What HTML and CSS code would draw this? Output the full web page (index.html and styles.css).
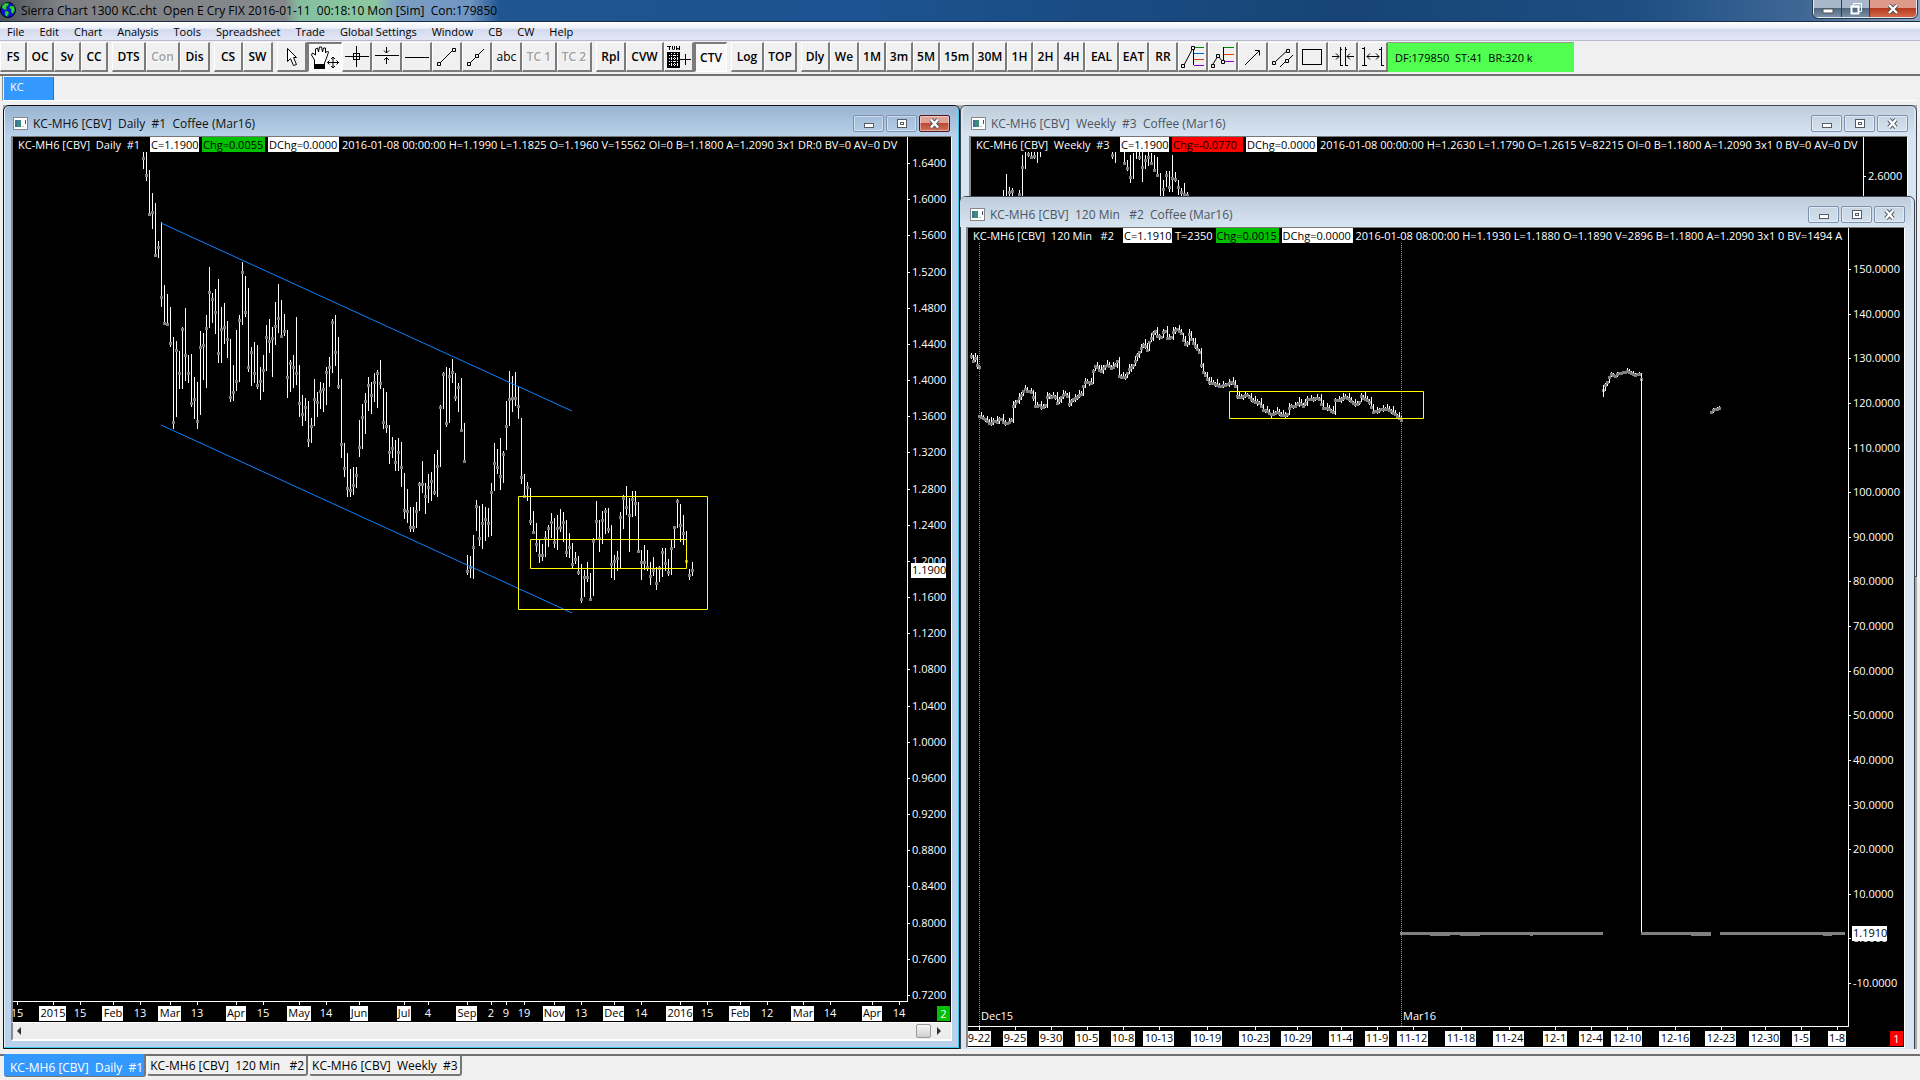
FILE: index.html
```html
<!DOCTYPE html>
<html lang="en">
<head>
<meta charset="utf-8">
<title>Sierra Chart 1300 KC.cht</title>
<link rel="stylesheet" href="styles.css">
</head>
<body>
<header class="app-title">
  <svg class="globe" viewBox="0 0 16 16" width="16" height="16"><circle cx="8" cy="8" r="7.5" fill="#0a14e6" stroke="#000"/><path d="M2 4l3-3 4 0-1 3-2 1 1 2-2 1-3-2zM5 9l3 0 1 2-2 4-2-2zM10 4l4 0 1 4-2 4-2-2 0-3-2-1z" fill="#2fd02f" stroke="#053" stroke-width=".5"/></svg>
  <h1 class="app-name">Sierra Chart 1300 KC.cht&nbsp; Open E Cry FIX 2016-01-11&nbsp; 00:18:10 Mon [Sim]&nbsp; Con:179850</h1>
  <div class="app-controls">
    <button class="app-btn" aria-label="Minimize"><svg width="12" height="10"><rect x="1" y="5" width="10" height="4" fill="#fff" stroke="#555"/></svg></button>
    <button class="app-btn" aria-label="Restore"><svg width="12" height="12"><path d="M3.500 3V.5h8v8H9" fill="none" stroke="#fff"/><rect x="1.500" y="3.500" width="7" height="7" fill="none" stroke="#fff" stroke-width="2"/></svg></button>
    <button class="app-btn app-close" aria-label="Close"><svg width="12" height="10"><path d="M2 1l8 8M10 1l-8 8" stroke="#444" stroke-width="4"/><path d="M2 1l8 8M10 1l-8 8" stroke="#fff" stroke-width="2.400"/></svg></button>
  </div>
</header>
<nav class="menu">
  <a href="#">File</a><a href="#">Edit</a><a href="#">Chart</a><a href="#">Analysis</a><a href="#">Tools</a><a href="#">Spreadsheet</a><a href="#">Trade</a><a href="#">Global Settings</a><a href="#">Window</a><a href="#">CB</a><a href="#">CW</a><a href="#">Help</a>
</nav>
<div class="toolbar">
  <div class="group"><button class="tool s">FS</button><button class="tool s">OC</button><button class="tool s">Sv</button><button class="tool s">CC</button></div>
  <div class="group"><button class="tool l">DTS</button><button class="tool l" disabled>Con</button><button class="tool m">Dis</button></div>
  <div class="group"><button class="tool sm">CS</button><button class="tool m">SW</button></div>
  <div class="group">
    <button class="tool m" aria-label="Pointer"><svg width="24" height="24"><path d="M7.500 3.500v13l3-3 3 7 3-1-3-7h3z" fill="#fff" stroke="#000"/></svg></button>
    <button class="tool ll on" aria-label="Hand"><svg width="30" height="26"><path d="M4.500 20v-5l-3-5 1-2 3 2 0-6 2-1 1 4 1-5 2 0 1 5 1-4 2 0 0 5 2-2 1 1-2 6-2 5v3z" fill="#fff" stroke="#000"/><rect x="4" y="19" width="11" height="5"/><path d="M17.500 17.500h11M23 12v11M19.500 15.500l-2 2 2 2M26.500 15.500l2 2-2 2M21 14l2-2 2 2M21 21l2 2 2-2" fill="none" stroke="#000"/></svg></button>
    <button class="tool m" aria-label="Crosshair"><svg width="24" height="24"><path d="M0 11.500h24M11.500 1v21" stroke="#000"/><rect x="8.500" y="8.500" width="6" height="6" fill="none" stroke="#000"/></svg></button>
    <button class="tool m" aria-label="Price marker"><svg width="24" height="24"><path d="M0 10.500h24M11.500 2v6M11.500 12v7M9 5.500l2.500 2.500 2.500-2.500M9 15l2.500-2.500 2.500 2.500" fill="none" stroke="#000"/></svg></button>
    <button class="tool m" aria-label="Horizontal line"><svg width="24" height="24"><path d="M0 12.500h24" stroke="#000"/></svg></button>
    <button class="tool m" aria-label="Line"><svg width="24" height="24"><path d="M5 18L18 5" stroke="#000"/><path d="M2.500 17.500h3v3h-3zM17.500 3.500h3v3h-3z" fill="none" stroke="#000"/></svg></button>
    <button class="tool m" aria-label="Ray"><svg width="24" height="24"><path d="M5 18l6-6M13 10l6-6" stroke="#000"/><path d="M2.500 17.500h3v3h-3zM10.500 9.500h3v3h-3z" fill="#f0f0f0" stroke="#000"/></svg></button>
    <button class="tool m plain">abc</button><button class="tool ll" disabled>TC 1</button><button class="tool ll" disabled>TC 2</button>
  </div>
  <div class="group"><button class="tool m">Rpl</button><button class="tool xl">CVW</button>
    <button class="tool m" aria-label="Trade window"><svg width="26" height="26"><path d="M1 2.500h4M3.500 2v4M6.500 2v3l1 1 1-1v-3M10.500 2v4l1.500-2 1.500 2v-4" fill="none" stroke="#000"/><rect x="1" y="8" width="13" height="16"/><path d="M3 11.500h10M3 14.500h10M3 17.500h10M3 20.500h10M5.500 9v14M8.500 9v14M11.500 9v14" stroke="#fff" stroke-dasharray="1 1"/><path d="M14 15.500h11M19.500 10v11" stroke="#000"/></svg></button><button class="tool ml on">CTV</button></div>
  <div class="group"><button class="tool ml">Log</button><button class="tool ml">TOP</button></div>
  <div class="group"><button class="tool sm">Dly</button><button class="tool sm">We</button><button class="tool s">1M</button><button class="tool s">3m</button><button class="tool s">5M</button><button class="tool l">15m</button><button class="tool ml">30M</button><button class="tool xs">1H</button><button class="tool xs">2H</button><button class="tool xs">4H</button><button class="tool l">EAL</button><button class="tool m">EAT</button><button class="tool sm">RR</button>
    <button class="tool m" aria-label="Retracement"><svg width="26" height="26"><path d="M4 21l9-17M13.500 4v17" stroke="#000"/><path d="M1.500 20.500h3v3h-3zM11.500 2.500h3v3h-3z" fill="#eee" stroke="#000"/><path d="M15 3.500h9" stroke="#080"/><path d="M14 9.500h10" stroke="#06c"/><path d="M14 15.500h10" stroke="#d40"/><path d="M14 21.500h10" stroke="#90c"/></svg></button>
    <button class="tool m" aria-label="Projection"><svg width="26" height="26"><path d="M3 20l5-8 5 6M13.500 18V3" fill="none" stroke="#000"/><path d="M1.500 20.500h3v3h-3zM6.500 10.500h3v3h-3zM11.500 16.500h3v3h-3z" fill="#eee" stroke="#000"/><path d="M14 3.500h10" stroke="#080"/><path d="M14 10.500h10" stroke="#d40"/><path d="M15 17.500h9" stroke="#90c"/></svg></button>
    <button class="tool m" aria-label="Arrow"><svg width="24" height="24"><path d="M4 20L18 6M14 5.500h4.500v5" fill="none" stroke="#000"/></svg></button>
    <button class="tool m" aria-label="Parallel lines"><svg width="24" height="24"><path d="M5 16L18 4M9 22l6-6M17 15l5-5" stroke="#000"/><path d="M1.500 16.500h3v3h-3zM15.500 4.500h3v3h-3zM14.500 14.500h3v3h-3z" fill="#eee" stroke="#000"/></svg></button>
    <button class="tool m" aria-label="Rectangle"><svg width="24" height="24"><rect x="1.500" y="4.500" width="19" height="15" fill="none" stroke="#000"/></svg></button>
    <button class="tool m" aria-label="Decrease spacing"><svg width="24" height="24"><path d="M9.500 2v18M14.500 2v18M9 20.500h3M14 20.500h3M9 4.500h2M14 4.500h2M1 11.500h7M23 11.500h-7M5 8.500l3 3-3 3M19 8.500l-3 3 3 3" fill="none" stroke="#000"/></svg></button>
    <button class="tool m" aria-label="Increase spacing"><svg width="24" height="24"><path d="M3.500 2v19M20.500 2v19M1 3.500h3M1 20.500h5M18 4.500h3M20 20.500h3M6 11.500h12M9 8.500l-3 3 3 3M15 8.500l3 3-3 3" fill="none" stroke="#000"/></svg></button>
  </div>
  <div class="feed">DF:179850&nbsp; ST:41&nbsp; BR:320 k</div>
</div>
<div class="books"><button class="book">KC</button></div>

<main class="desk">
  <section class="win weekly">
    <header class="bar"><svg class="doc"><use href="#doc"/></svg><h2>KC-MH6 [CBV]&nbsp; Weekly&nbsp; #3&nbsp; Coffee (Mar16)</h2>
      <button class="ctl" aria-label="Minimize"><svg><use href="#min"/></svg></button><button class="ctl" aria-label="Maximize"><svg><use href="#max"/></svg></button><button class="ctl" aria-label="Close"><svg><use href="#cls"/></svg></button></header>
    <div class="chart">
      <div class="info"><span class="name">KC-MH6 [CBV]&nbsp; Weekly&nbsp; #3</span><span class="hi w50">C=1.1900</span><span class="hi red w70">Chg=-0.0770</span><span class="hi w70">DChg=0.0000</span><span>2016-01-08 00:00:00 H=1.2630 L=1.1790 O=1.2615 V=82215 OI=0 B=1.1800 A=1.2090 3x1 0 BV=0 AV=0 DV</span></div>
      <svg class="plot" id="weekly-plot"></svg>
      <svg class="prices" id="weekly-prices"></svg>
    </div>
  </section>

  <section class="win minutes">
    <header class="bar"><svg class="doc"><use href="#doc"/></svg><h2>KC-MH6 [CBV]&nbsp; 120 Min&nbsp;&nbsp; #2&nbsp; Coffee (Mar16)</h2>
      <button class="ctl" aria-label="Minimize"><svg><use href="#min"/></svg></button><button class="ctl" aria-label="Maximize"><svg><use href="#max"/></svg></button><button class="ctl" aria-label="Close"><svg><use href="#cls"/></svg></button></header>
    <div class="chart">
      <div class="info"><span class="name">KC-MH6 [CBV]&nbsp; 120 Min&nbsp;&nbsp; #2</span><span class="hi w50">C=1.1910</span><span>T=2350</span><span class="hi green w63">Chg=0.0015</span><span class="hi w70">DChg=0.0000</span><span>2016-01-08 08:00:00 H=1.1930 L=1.1880 O=1.1890 V=2896 B=1.1800 A=1.2090 3x1 0 BV=1494 A</span></div>
      <svg class="plot" id="minutes-plot"></svg>
      <svg class="prices" id="minutes-prices"></svg>
      <div class="dates"><svg id="minutes-dates"></svg><span class="count red">1</span></div>
    </div>
  </section>

  <section class="win daily">
    <header class="bar"><svg class="doc"><use href="#doc"/></svg><h2>KC-MH6 [CBV]&nbsp; Daily&nbsp; #1&nbsp; Coffee (Mar16)</h2>
      <button class="ctl" aria-label="Minimize"><svg><use href="#min"/></svg></button><button class="ctl" aria-label="Maximize"><svg><use href="#max"/></svg></button><button class="ctl close" aria-label="Close"><svg><use href="#cls"/></svg></button></header>
    <div class="chart">
      <div class="info"><span class="name">KC-MH6 [CBV]&nbsp; Daily&nbsp; #1</span><span class="hi w50">C=1.1900</span><span class="hi green w63">Chg=0.0055</span><span class="hi w70">DChg=0.0000</span><span>2016-01-08 00:00:00 H=1.1990 L=1.1825 O=1.1960 V=15562 OI=0 B=1.1800 A=1.2090 3x1 DR:0 BV=0 AV=0 DV</span></div>
      <svg class="plot" id="daily-plot"></svg>
      <svg class="prices" id="daily-prices"></svg>
      <div class="dates"><svg id="daily-dates"></svg><span class="count green">2</span></div>
    </div>
    <div class="scroll"><button aria-label="Scroll left"><svg width="5" height="8"><path d="M4 0L0 4l4 4z" fill="#333"/></svg></button><div class="thumb"></div><button aria-label="Scroll right"><svg width="5" height="8"><path d="M0 0l4 4-4 4z" fill="#333"/></svg></button></div>
  </section>
</main>

<footer class="tabs"><button class="tab active">KC-MH6 [CBV]&nbsp; Daily&nbsp; #1</button><button class="tab">KC-MH6 [CBV]&nbsp; 120 Min&nbsp;&nbsp; #2</button><button class="tab">KC-MH6 [CBV]&nbsp; Weekly&nbsp; #3</button></footer>

<svg class="symbols">
  <symbol id="doc" viewBox="0 0 15 13"><rect x=".5" y=".5" width="14" height="12" fill="#fff" stroke="#888"/><rect x="2" y="3" width="6" height="7" fill="#3d8a80"/><rect x="2" y="3" width="2" height="7" fill="#3b6f9c"/><rect x="9" y="9" width="2" height="1" fill="#bbb"/><rect x="12" y="3" width="1" height="4" fill="#457"/></symbol>
  <symbol id="min" viewBox="0 0 13 11"><rect x="2.500" y="5.500" width="9" height="4" fill="#fff" stroke="#555b66"/></symbol>
  <symbol id="max" viewBox="0 0 13 11"><rect x="2.500" y="1.500" width="9" height="8" fill="#fff" stroke="#555b66"/><rect x="5.500" y="4.500" width="3" height="2" fill="none" stroke="#555b66"/></symbol>
  <symbol id="cls" viewBox="0 0 13 11"><path d="M3 1.500l7 8M10 1.500l-7 8" stroke="#555b66" stroke-width="4.400"/><path d="M3 1.500l7 8M10 1.500l-7 8" stroke="#fff" stroke-width="2.400"/></symbol>
</svg>
<script src="charts.js"></script>
</body>
</html>
```
FILE: styles.css
```css
* { box-sizing: border-box; }
body {
  margin: 0; height: 100vh; display: flex; flex-direction: column; overflow: hidden;
  background: #f0f0f0; color: #000; font: 11px/15px "Open Sans", "Noto Sans", sans-serif;
}
button { font: inherit; color: inherit; padding: 0; margin: 0; border: 0; background: none; }
svg { display: block; flex: none; }
h1, h2 { margin: 0; font: inherit; font-size: 12px; white-space: nowrap; }
.symbols { width: 0; height: 0; position: absolute; }

.app-title {
  display: flex; align-items: center; height: 22px; flex: none; padding-bottom: 1px;
  border-bottom: 1px solid #1b2b44;
  background: linear-gradient(90deg, #4c545c 0, #7f8184 60px, #85898c 285px, #86bfa0 300px, #8cc9a0 375px, #7d9fc4 395px, #6f95c2 470px, #1f5590 500px, #1c5390 45%, #174475 70%, #1d4d82 85%, #3f6896 94%, #8ba3bd 100%);
}
.globe { margin-right: 5px; }
.app-name { flex: 1; }
.app-controls { display: flex; align-self: flex-start; margin-right: 3px; border: 1px solid #e0e8f0; border-top: 0; border-radius: 0 0 5px 5px; outline: 1px solid #29384c; }
.app-btn { width: 28px; height: 17px; display: grid; place-items: center; border-right: 1px solid #2c3c52; background: linear-gradient(#a8b8ca 45%, #53677f 50%, #7890a8); }
.app-close { width: 46px; border: 0; border-radius: 0 0 4px 0; background: linear-gradient(#dd9a8b 45%, #b83a20 50%, #d2694a); }

.menu { display: flex; gap: 15px; padding: 2px 7px; height: 19px; flex: none; border-bottom: 1px solid #b6bccc; background: linear-gradient(#fff, #eef1f8 35%, #d4dbee 40%, #e2e7f6); }
.menu a { color: #000; text-decoration: none; }

.toolbar { display: flex; gap: 4px; height: 35px; flex: none; padding-top: 1px; border-bottom: 2px solid #707070; }
.group { display: flex; }
.tool { height: 30px; display: grid; place-items: center; overflow: hidden; font-size: 12px; font-weight: 600; border: 1px solid #fff; border-right: 2px solid #7b7b7b; border-bottom: 2px solid #7b7b7b; }
.tool.plain { font-weight: 400; }
.tool:disabled { color: #a0a0a0; text-shadow: 1px 1px #fff; }
.tool.on { border: 1px solid #fff; border-top: 2px solid #7b7b7b; border-left: 2px solid #7b7b7b; background: #f8f8f8; }
.xs { width: 26px; } .s { width: 27px; } .sm { width: 29px; } .m { width: 30px; } .ml { width: 33px; } .l { width: 34px; } .ll { width: 35px; } .xl { width: 38px; }
.feed { width: 186px; height: 30px; margin-left: -4px; padding: 7px; background: #50ff50; border-top: 1px solid #999; }

.books { height: 25px; flex: none; display: flex; margin: 0 4px 0 2px; padding: 1px 2px 0 1px; border-left: 1px solid #888; border-bottom: 1px solid #fff; }
.book { width: 50px; height: 23px; padding: 0 6px 5px; text-align: left; color: #fff; background: #3399ff; border-right: 1px solid #666; }

.desk { position: relative; flex: 1; overflow: hidden; margin: 4px 3px 5px; background: #ababab; }
.win { position: absolute; display: flex; flex-direction: column; border: 1px solid #3c4450; border-radius: 6px 6px 0 0; background: #d7e4f2; padding: 0 7px 7px; }
.win .bar { background: linear-gradient(#bfcddb, #d7e4f2); }
.daily { inset: 0 50% 0 0; background: #b9d1ea; border-color: #111; box-shadow: inset -1px -1px #3cc8e6, inset 1px 1px #e8f2fb; }
.win.daily .bar { background: linear-gradient(#99b4d1, #b9d1ea); color: #111; padding-right: 8px; }
.weekly { inset: 0 0 50% 50%; padding: 0 8px 7px; }
.minutes { inset: 91px 2px -7px 50%; padding: 0 9px 7px 5px; }
.bar { display: flex; align-items: center; gap: 2px; height: 30px; flex: none; margin: 0 -6px; padding: 5px 6px 0; border-radius: 5px 5px 0 0; color: #4c5560; }
.bar h2 { flex: 1; margin-left: 3px; }
.doc { width: 15px; height: 13px; margin-left: 2px; }
.minutes .doc { margin-left: 4px; }
.ctl { width: 31px; height: 17px; display: grid; place-items: center; border: 1px solid #8090b0; border-radius: 2px; box-shadow: inset 0 0 0 1px #ffffff70; }
.ctl svg { width: 13px; height: 11px; }
.ctl.close { border-color: #4f1420; background: linear-gradient(#e0a197 45%, #bd4a35 50%, #d0715a); }
.chart {
  flex: 1; min-height: 0; display: grid; grid-template: 15px 1fr auto / 1fr 43px; overflow: hidden;
  background: #000; color: #fff; border: 1px solid #fff; border-top-color: #777; border-left: 2px solid #888;
}
.minutes .chart { grid-template-columns: 1fr 55px; }
.info { display: flex; gap: 3px; min-width: 0; padding-left: 5px; overflow: hidden; white-space: pre; border-right: 1px solid #fff; }
.info span { flex: none; }
.daily .name { width: 129px; } .weekly .name { width: 141px; } .minutes .name { width: 147px; }
.hi { background: #fff; color: #000; padding-left: 1px; overflow: hidden; }
.w50 { width: 49px; } .w63 { width: 63px; } .w70 { width: 71px; }
.hi.red { background: #f00; } .hi.green { background: #00c000; }
.plot { width: 100%; height: 100%; grid-area: 2 / 1; border-right: 1px solid #fff; border-bottom: 1px solid #fff; }
.weekly .plot { border-bottom: 0; }
.prices { width: 100%; height: 100%; grid-area: 1 / 2 / 3 / 3; }
.dates { grid-column: 1 / 3; display: flex; height: 20px; }
.dates svg { flex: 1; min-width: 0; height: 20px; }
.count { width: 13px; height: 15px; margin: 4px 1px 0 0; text-align: center; }
.count.red { background: #f00; } .count.green { background: #00c000; }
.chart text { font-size: 11px; fill: #fff; }
.chart text.dark { fill: #000; }
.tick { fill: #fff; }
.mark { fill: #808080; }
.trend { stroke: #0a82ff; fill: none; }
.box { stroke: #ff0; fill: none; }
.dots { stroke: #999; stroke-dasharray: 1 1; }
.scroll { display: flex; align-items: center; height: 18px; flex: none; padding: 0 4px; border-left: 2px solid #888; border-right: 1px solid #fff; border-bottom: 2px solid #fff; background: #ededed; }
.scroll button { width: 10px; }
.thumb { width: 15px; height: 14px; margin-left: auto; margin-right: 6px; border: 1px solid #999; border-radius: 2px; background: linear-gradient(#f6f6f6, #d0d0d4); }

.tabs { height: 26px; flex: none; display: flex; align-items: flex-start; gap: 1px; padding-left: 4px; border-top: 2px solid #707070; }
.tab { height: 20px; padding: 0 2px; font-size: 12px; white-space: nowrap; border: 1px solid #fff; border-top: 0; border-right: 2px solid #777; border-bottom: 2px solid #777; border-radius: 0 0 3px 3px; }
.tab.active { height: 23px; padding: 4px 1px 0 6px; color: #fff; background: #3399ff; border-left: 0; border-bottom-width: 1px; margin-top: -2px; }
```
FILE: charts.js
```js
const NS = 'http://www.w3.org/2000/svg';
const get = id => document.getElementById(id);
function add(svg, tag, attrs, text) {
  const node = document.createElementNS(NS, tag);
  for (const key in attrs) node.setAttribute(key, attrs[key]);
  if (text !== undefined) node.textContent = text;
  svg.appendChild(node);
  return node;
}
const rect = (svg, x, y, width, height, cls) => add(svg, 'rect', { x, y, width, height, class: cls });

// One price bar: a white high-low stem with a grey close mark.
function bar(svg, x, hi, lo, close) {
  rect(svg, x, hi, 1, Math.max(1, lo - hi), 'tick');
  if (close !== undefined) rect(svg, x - 1, close - 1, 3, 3, 'mark');
}
function priceAxis(svg, top, step, first, change, count, digitsX) {
  for (let i = 0; i < count; i++) {
    const y = Math.round(top + step * i);
    rect(svg, 0, y, 2, 1, 'tick');
    add(svg, 'text', { x: digitsX, y: y + 4 }, (first - change * i).toFixed(4));
  }
}
function priceTag(svg, y, value, x, width) {
  rect(svg, x - 1, y - 7, width, 15, 'tick');
  add(svg, 'text', { x, y: y + 4, class: 'dark' }, value);
}
function dateAxis(svg, labels, boxed) {
  for (const [x, label] of labels) {
    rect(svg, x, 0, 1, 3, 'tick');
    const node = add(svg, 'text', { x, y: 15, 'text-anchor': 'middle' }, label);
    if (boxed || /[A-Z]|20/.test(label)) {
      const w = Math.round(node.getComputedTextLength()) + 2;
      svg.insertBefore(rect(svg, x - Math.round(w / 2), 4, w, 15, 'tick'), node);
      node.setAttribute('class', 'dark');
    }
  }
}

// Daily: high, low, close in thirds of a pixel, one bar every three pixels.
const daily = `36 86 55,36 122 106,90 225 223,159 268 215,189 350 344,303 353 322,246 500 472,435 556 550,462 559 553,500 620 610,590 868 845,603 830 631,632 746 700,561 748 568,505 722 646,645 730 700,642 802 790,711 836 778,727 868 842,573 824 620,578 720 615,525 745 563,382 563 455,459 550 478,447 581 516,417 668 640,501 670 568,489 612 560,543 655 598,598 785 772,675 782 757,570 752 722,526 727 541,366 556 397,408 530 516,445 697 682,621 738 636,606 730 698,615 748 735,680 781 722,645 755 690,555 692 590,537 640 602,562 712 595,486 614 557,432 578 535,480 595 588,522 588 573,570 773 710,660 755 670,645 745 680,531 735 700,675 830 788,765 857 823,773 843 802,783 922 900,835 908 857,717 857 776,755 830 786,727 808 752,730 817 748,680 796 697,651 742 680,537 700 545,526 677 635,591 748 738,717 955 912,910 1012 983,939 1070 1043,987 1072 1050,981 1066 1035,981 1045 1006,840 950 920,793 928 830,759 881 784,711 812 735,727 821 766,699 785 726,690 803 698,660 748 728,744 866 847,756 880 858,855 973 935,891 955 925,900 992 965,894 992 937,906 1040 980,999 1138 1110,1047 1150 1112,1102 1175 1162,1101 1176 1160,1086 1165 1112,1026 1112 1033,963 1058 1032,1030 1123 1068,1002 1088 1040,996 1082 1022,942 1064 1055,930 1070 978,795 982 802,696 806 703,681 860 850,684 850 708,657 728 697,699 782 770,729 815 742,714 874 870,850 967 964,1245 1305 1294,1248 1313 1280,1185 1318 1220,1080 1172 1098,1098 1218 1195,1092 1226 1150,1102 1202 1137,1105 1192 1150,1029 1188 1055,909 1052 968,927 1003 980,894 1050 1008,933 1028 942,783 930 857,693 857 778,708 815 773,696 797 775,738 838 798,834 1033 1012,1003 1075 1068,1026 1082 1042,1045 1155 1143,1113 1181 1177,1149 1235 1212,1200 1270 1245,1212 1262 1245,1173 1250 1195,1155 1220 1163,1119 1195 1145,1134 1223 1205,1126 1229 1165,1107 1175 1160,1116 1205 1147,1140 1252 1235,1179 1254 1220,1209 1285 1272,1236 1272 1258,1248 1304 1297,1272 1388 1378,1290 1370 1312,1266 1325 1310,1300 1382 1378,1194 1368 1203,1084 1198 1144,1140 1235 1195,1113 1211 1140,1104 1182 1112,1104 1178 1166,1155 1313 1273,1245 1320 1262,1233 1292 1255,1116 1286 1130,1065 1167 1075,1038 1125 1100,1074 1235 1125,1053 1130 1078,1053 1128 1090,1087 1238 1233,1230 1320 1267,1215 1290 1265,1230 1293 1282,1266 1335 1308,1251 1307 1290,1282 1349 1330,1278 1327 1285,1224 1310 1237,1224 1293 1270,1257 1307 1295,1197 1305 1225,1158 1225 1160,1077 1165 1082,1092 1205 1156,1125 1214 1180,1173 1275 1264,1287 1320 1306,1266 1307 1290`;
const dp = get('daily-plot');
const third = v => Math.round(v / 3);
daily.split(',').forEach((row, i) => {
  const [hi, lo, close] = row.split(' ').map(v => third(v - 36));
  bar(dp, 130 + 3 * i, hi, lo, close);
});
add(dp, 'path', { class: 'trend', d: 'M148 71L559 259M148 273L559 461' });
add(dp, 'path', { class: 'box', d: 'M505.500 344.500h189v113h-189zM517.500 387.500h156v29h-156z' });
priceAxis(get('daily-prices'), 26, 36.17, 1.64, 0.04, 24, 4);
priceTag(get('daily-prices'), 433, '1.1900', 4, 35);
dateAxis(get('daily-dates'), [[4, '15'], [40, '2015'], [67, '15'], [100, 'Feb'], [127, '13'], [157, 'Mar'], [184, '13'], [223, 'Apr'], [250, '15'], [286, 'May'], [313, '14'], [346, 'Jun'], [391, 'Jul'], [415, '4'], [454, 'Sep'], [478, '2'], [493, '9'], [511, '19'], [541, 'Nov'], [568, '13'], [601, 'Dec'], [628, '14'], [667, '2016'], [694, '15'], [727, 'Feb'], [754, '12'], [790, 'Mar'], [817, '14'], [859, 'Apr'], [886, '14']]);

// Weekly: x, high, low, close.
const weekly = '187 270 289,196 222 289,205 262 289 275,214 265 289 272,233 270 289 283,242 165 289 200,251 155 208,260 155 170 162,269 155 178 172,278 155 176 168,287 155 190,296 155 172,512 155 178 165,521 155 190,548 155 195 188,557 180 213 205,566 165 250 230,575 160 238,584 155 178,593 155 180 170,602 155 247 200,611 165 208 180,620 155 198 170,629 158 188 190,638 165 217 210,647 170 230 225,656 220 289,665 240 289 268,674 213 262 225,683 212 275 262,692 165 275 235,701 215 247 238,710 240 285 262,719 265 289 275,728 248 289 283,737 275 289 286';
weekly.split(',').forEach(row => {
  const [x, hi, lo, close] = row.split(' ').map(Number);
  bar(get('weekly-plot'), third(x - 90), third(hi - 156), third(lo - 156), close && third(close - 156));
});
priceAxis(get('weekly-prices'), 39, 0, 2.6, 0, 1, 4);

// 120 minute: closes along a path; bar ranges vary around them.
const runs = [
  '92 770,98 785,104 775,110 798,116 803',
  '116 950,128 955,138 963,150 973,160 962,170 967,180 955,188 968,203 972,212 962,216 925,222 912,230 905,240 890,252 868,262 876,272 877,280 900,284 920,296 918,306 926,316 915,322 880,330 895,342 888,350 912,358 898,366 888,378 882,386 915,396 900,410 892,424 882,430 850,440 848,452 850,458 815,466 795,476 812,484 814,492 800,502 795,512 805,522 800,530 785,536 830,546 835,556 832,566 808,580 795,590 768,602 745,612 730,618 760,626 728,636 708,642 690,650 710,662 712,672 690,680 715,690 718,700 692,710 690,722 700,730 730,738 738,746 705,754 722,766 745,776 758,784 810,796 832,808 852,820 852,834 860,850 858,862 852,876 848,886 862,888 890,900 895,918 884,936 905,958 912,966 930,980 935,992 945,1010 938,1024 948,1040 945,1048 918,1062 922,1074 908,1090 922,1100 898,1114 900,1126 895,1138 900,1146 925,1160 925,1178 938,1184 902,1200 900,1216 892,1228 902,1240 912,1254 915,1260 890,1276 900,1288 908,1296 938,1310 935,1326 928,1342 930,1356 938,1370 950,1382 962',
  '1990 873,1994 858,2000 854,2006 838,2012 826,2018 824,2024 834,2032 823,2044 820,2056 818,2064 812,2070 820,2080 825,2090 826,2096 820,2104 838',
  '2312 937,2320 930,2332 929,2340 920'
];
const mp = get('minutes-plot');
runs.forEach((run, r) => {
  const pts = run.split(',').map(p => p.split(' ').map(Number));
  let seg = 0, prev = pts[0][1];
  for (let x = pts[0][0]; x <= pts[pts.length - 1][0]; x += 6) {
    while (seg < pts.length - 2 && pts[seg + 1][0] < x) seg++;
    const [x0, y0] = pts[seg], [x1, y1] = pts[seg + 1];
    const y = y0 + (y1 - y0) * (x - x0) / (x1 - x0);
    const n = Math.round(x / 6), up = (n * 7 % 11) * (r < 2 ? 1.6 : .7), down = (n * 5 % 7) * (r < 2 ? 1.6 : .5);
    bar(mp, third(x - 84), third(Math.min(y, prev) - up - 383 - 48), third(Math.max(y, prev) + down - 383 - 48), third(y - 383 - 48));
    prev = y;
  }
});
rect(mp, 635, 142, 1, 12, 'tick');
rect(mp, 673, 136, 1, 553, 'tick');
for (const [x, w] of [[432, 203], [673, 70], [752, 125]]) rect(mp, x, 689, w, 3, 'mark');
for (const [x, w] of [[462, 20], [492, 20], [562, 3], [723, 20], [855, 9]]) rect(mp, x, 690, w, 3, 'mark');
add(mp, 'path', { class: 'dots', d: 'M11.500 0V784M433.500 0V784' });
add(mp, 'path', { class: 'box', d: 'M261.500 148.500h194v27h-194z' });
add(mp, 'text', { x: 13, y: 777 }, 'Dec15');
add(mp, 'text', { x: 435, y: 777 }, 'Mar16');
priceAxis(get('minutes-prices'), 41, 44.63, 150, 10, 17, 4);
priceTag(get('minutes-prices'), 705, '1.1910', 4, 35);
dateAxis(get('minutes-dates'), [[11, '9-22'], [47, '9-25'], [83, '9-30'], [119, '10-5'], [155, '10-8'], [191, '10-13'], [239, '10-19'], [287, '10-23'], [329, '10-29'], [373, '11-4'], [409, '11-9'], [445, '11-12'], [493, '11-18'], [541, '11-24'], [587, '12-1'], [623, '12-4'], [659, '12-10'], [707, '12-16'], [753, '12-23'], [797, '12-30'], [833, '1-5'], [869, '1-8']], true);
```
